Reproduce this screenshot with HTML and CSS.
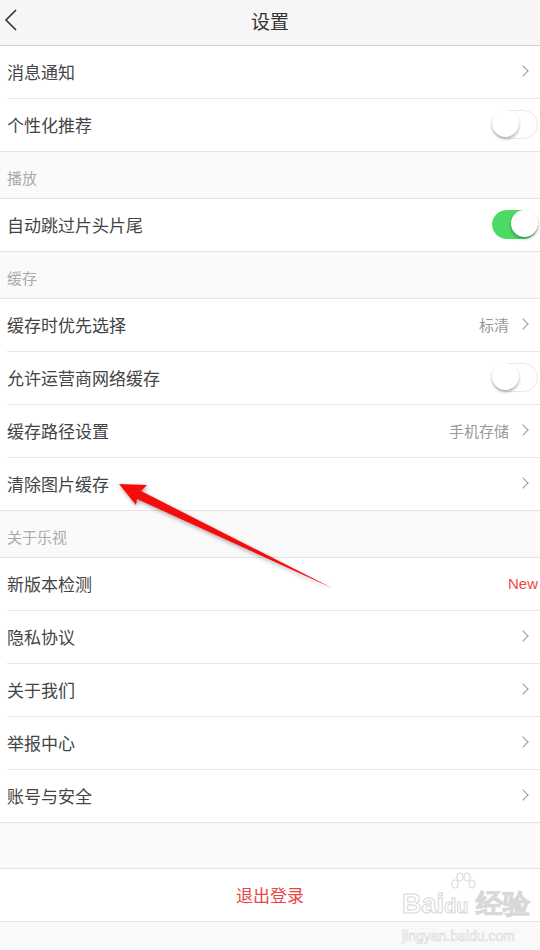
FILE: index.html
```
<!DOCTYPE html>
<html lang="zh">
<head>
    <meta charset="UTF-8">
    <meta name="viewport" content="width=device-width, initial-scale=1.0">
    <title>设置</title>
    <link rel="stylesheet" href="styles.css">
</head>
<body>
    <div class="page">
        <!-- 顶部栏 -->
        <div class="topbar">
            <svg class="back" width="14" height="24" viewBox="0 0 14 24"><path d="M12 2 L2 12 L12 22" fill="none" stroke="#333" stroke-width="1.6"/></svg>
            <div class="title">设置</div>
        </div>

        <div class="group">
            <div class="row"><span class="label">消息通知</span><span class="chev"></span></div>
            <div class="row last"><span class="label">个性化推荐</span><span class="toggle"></span></div>
        </div>

        <div class="section">播放</div>
        <div class="group">
            <div class="row last"><span class="label">自动跳过片头片尾</span><span class="toggle on"></span></div>
        </div>

        <div class="section">缓存</div>
        <div class="group">
            <div class="row"><span class="label">缓存时优先选择</span><span class="value">标清</span><span class="chev"></span></div>
            <div class="row"><span class="label">允许运营商网络缓存</span><span class="toggle"></span></div>
            <div class="row"><span class="label">缓存路径设置</span><span class="value">手机存储</span><span class="chev"></span></div>
            <div class="row last"><span class="label">清除图片缓存</span><span class="chev"></span></div>
        </div>

        <div class="section">关于乐视</div>
        <div class="group">
            <div class="row"><span class="label">新版本检测</span><span class="new">New</span></div>
            <div class="row"><span class="label">隐私协议</span><span class="chev"></span></div>
            <div class="row"><span class="label">关于我们</span><span class="chev"></span></div>
            <div class="row"><span class="label">举报中心</span><span class="chev"></span></div>
            <div class="row last"><span class="label">账号与安全</span><span class="chev"></span></div>
        </div>

        <div class="spacer"></div>
        <div class="group">
            <div class="row logout last">退出登录</div>
        </div>

        <!-- 红色箭头标注 -->
        <svg class="arrow" width="540" height="950" viewBox="0 0 540 950">
            <defs>
                <filter id="sh" x="-20%" y="-20%" width="140%" height="140%">
                    <feDropShadow dx="1" dy="2" stdDeviation="2" flood-color="#000" flood-opacity="0.35"/>
                </filter>
            </defs>
            <polygon points="119,484 147,485 141,491 332,588 137,499 136,505" fill="#f50a0a" filter="url(#sh)"/>
        </svg>

        <!-- 水印 -->
        <div class="watermark">
            <svg class="wm-paw" width="30" height="22" viewBox="0 0 30 22">
                <g fill="none" stroke="#dcdcdc" stroke-width="1.2">
                    <ellipse cx="7" cy="12" rx="3" ry="4"/>
                    <ellipse cx="12" cy="5" rx="3" ry="4"/>
                    <ellipse cx="19" cy="5" rx="3" ry="4"/>
                    <ellipse cx="24" cy="12" rx="3" ry="4"/>
                </g>
            </svg>
            <div class="wm-logo">Bai<span class="wm-du">du</span> 经验</div>
            <div class="wm-url">jingyan.baidu.com</div>
        </div>
    </div>
</body>
</html>
```

FILE: styles.css
```
body {
    margin: 0;
    font-family: "Noto Sans CJK SC", "Noto Sans", sans-serif;
    background-color: #f9f9f9;
    color: #333;
}

.page {
    position: relative;
    width: 540px;
    height: 950px;
    overflow: hidden;
}

.topbar {
    height: 45px;
    background-color: #f6f6f6;
    border-bottom: 1px solid #cfcfcf;
    display: flex;
    align-items: center;
    justify-content: center;
    position: relative;
}

.back {
    position: absolute;
    left: 4px;
    top: 8px;
}

.title {
    font-size: 19px;
    color: #333;
    margin-top: -5px;
}

.group {
    background-color: #fff;
    border-bottom: 1px solid #e3e3e3;
}

.row {
    height: 50px;
    padding-bottom: 2px;
    margin-left: 7px;
    padding-right: 9px;
    display: flex;
    align-items: center;
    border-bottom: 1px solid #e6e6e6;
}

.row.last {
    border-bottom: none;
}

.label {
    flex: 1;
    font-size: 17px;
    color: #444;
}

.value {
    font-size: 15px;
    color: #999;
    margin-right: 10px;
}

.chev {
    width: 7px;
    height: 7px;
    border-top: 1.5px solid #999;
    border-right: 1.5px solid #999;
    transform: rotate(45deg);
    margin-right: 4px;
}

.new {
    font-family: "Liberation Sans", Arial, sans-serif;
    font-size: 15px;
    color: #f04848;
    margin-right: -7px;
}

.toggle {
    width: 44px;
    height: 27px;
    border-radius: 15px;
    border: 1.5px solid #e8e8e8;
    background-color: #fff;
    position: relative;
    margin-right: -7px;
}

.toggle::after {
    content: "";
    position: absolute;
    left: -1px;
    top: -1px;
    width: 27px;
    height: 27px;
    border-radius: 50%;
    background-color: #fff;
    box-shadow: 0 2px 3px rgba(0, 0, 0, 0.3);
}

.toggle.on {
    background-color: #4cd964;
    border-color: #4cd964;
}

.toggle.on::after {
    left: auto;
    right: -1px;
}

.section {
    height: 42px;
    padding-top: 4px;
    padding-left: 7px;
    display: flex;
    align-items: center;
    font-size: 15px;
    color: #aaa;
    border-bottom: 1px solid #e3e3e3;
    background-color: #fafafa;
}

.spacer {
    height: 45px;
    border-bottom: 1px solid #e3e3e3;
    background-color: #fafafa;
}

.logout {
    justify-content: center;
    margin-left: 0;
    padding-right: 0;
    font-size: 17px;
    color: #ec4545;
}

.arrow {
    position: absolute;
    left: 0;
    top: 0;
    pointer-events: none;
}

.watermark {
    position: absolute;
    left: 402px;
    top: 888px;
    color: #fff;
    font-family: "Liberation Sans", Arial, sans-serif;
    font-weight: bold;
    -webkit-text-stroke: 1px #d8d8d8;
}

.wm-paw {
    position: absolute;
    left: 46px;
    top: -16px;
}

.wm-logo {
    font-size: 27px;
    line-height: 32px;
}

.wm-du {
    font-size: 20px;
}

.wm-url {
    font-size: 14px;
    font-weight: normal;
    -webkit-text-stroke: 0.6px #d8d8d8;
    margin-top: 6px;
}
```
